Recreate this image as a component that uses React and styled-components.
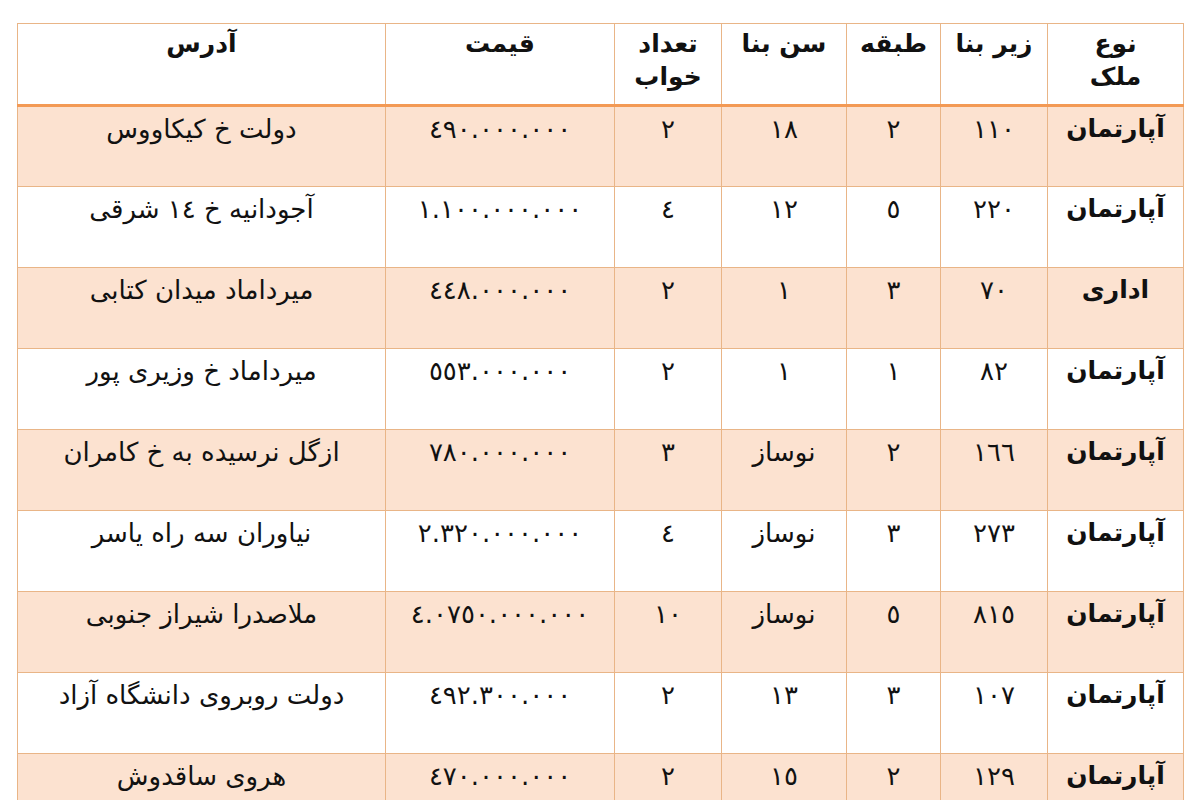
import React from 'react';
import styled, { createGlobalStyle } from 'styled-components';

const GlobalStyle = createGlobalStyle`
    html, body {
        margin: 0;
        padding: 0;
        background: #ffffff;
        overflow: hidden;
    }
`;

const colors = {
    peach: '#fce2d0',
    grid: '#e9b587',
    accent: '#f39a55',
    text: '#111111',
};

const toFa = (value) => String(value).replace(/[0-9]/g, (d) => '٠١٢٣٤٥٦٧٨٩'[d]);
const isNumeric = (value) => /^[0-9.]+$/.test(value);

const columns = [
    { key: 'type', title: ['نوع', 'ملک'], width: 136, bold: true },
    { key: 'area', title: ['زیر بنا'], width: 107 },
    { key: 'floor', title: ['طبقه'], width: 94 },
    { key: 'age', title: ['سن بنا'], width: 125 },
    { key: 'beds', title: ['تعداد', 'خواب'], width: 107 },
    { key: 'price', title: ['قیمت'], width: 229 },
    { key: 'address', title: ['آدرس'], width: 368 },
];

const rows = [
    { type: 'آپارتمان', area: '110', floor: '2', age: '18', beds: '2', price: '490.000.000', address: 'دولت خ کیکاووس' },
    { type: 'آپارتمان', area: '220', floor: '5', age: '12', beds: '4', price: '1.100.000.000', address: 'آجودانیه خ ١٤ شرقی' },
    { type: 'اداری', area: '70', floor: '3', age: '1', beds: '2', price: '448.000.000', address: 'میرداماد میدان کتابی' },
    { type: 'آپارتمان', area: '82', floor: '1', age: '1', beds: '2', price: '553.000.000', address: 'میرداماد خ وزیری پور' },
    { type: 'آپارتمان', area: '166', floor: '2', age: 'نوساز', beds: '3', price: '780.000.000', address: 'ازگل نرسیده به خ کامران' },
    { type: 'آپارتمان', area: '273', floor: '3', age: 'نوساز', beds: '4', price: '2.320.000.000', address: 'نیاوران سه راه یاسر' },
    { type: 'آپارتمان', area: '815', floor: '5', age: 'نوساز', beds: '10', price: '4.0750.000.000', address: 'ملاصدرا شیراز جنوبی' },
    { type: 'آپارتمان', area: '107', floor: '3', age: '13', beds: '2', price: '492.300.000', address: 'دولت روبروی دانشگاه آزاد' },
    { type: 'آپارتمان', area: '129', floor: '2', age: '15', beds: '2', price: '470.000.000', address: 'هروی ساقدوش' },
];

const Page = styled.div`
    padding: 23px 17px 0;
    font-family: 'DejaVu Sans', Tahoma, sans-serif;
    color: ${ colors.text };
`;

const Table = styled.table`
    direction: rtl;
    width: 1166px;
    table-layout: fixed;
    border-collapse: collapse;
    border: 1px solid ${ colors.grid };
`;

const HeadCell = styled.th`
    height: 77px;
    padding: 3px 4px 0;
    vertical-align: top;
    text-align: center;
    font-size: 25px;
    font-weight: bold;
    line-height: 33px;
    border-left: 1px solid ${ colors.grid };
    border-right: 1px solid ${ colors.grid };
    border-bottom: 3px solid ${ colors.accent };
`;

const Row = styled.tr`
    background: ${ props => props.$shaded ? colors.peach : '#ffffff' };
`;

const Cell = styled.td`
    height: 81px;
    padding: 6px 4px 0;
    box-sizing: border-box;
    vertical-align: top;
    text-align: center;
    font-size: ${ props => props.$bold ? 25 : 26 }px;
    line-height: 32px;
    letter-spacing: ${ props => props.$numeric ? '2px' : 'normal' };
    font-weight: ${ props => props.$bold ? 'bold' : 'normal' };
    border: 1px solid ${ colors.grid };
    white-space: nowrap;
`;

export default function App() {
    return (
        <Page>
            <GlobalStyle />
            <Table>
                <colgroup>
                    { columns.map(col => <col key={ col.key } style={ { width: col.width } } />) }
                </colgroup>
                <thead>
                    <tr>
                        { columns.map(col => (
                            <HeadCell key={ col.key }>
                                { col.title.map((line, i) => <div key={ i }>{ line }</div>) }
                            </HeadCell>
                        )) }
                    </tr>
                </thead>
                <tbody>
                    { rows.map((row, i) => (
                        <Row key={ i } $shaded={ i % 2 === 0 }>
                            { columns.map(col => (
                                <Cell key={ col.key } $bold={ col.bold } $numeric={ isNumeric(row[col.key]) }>
                                    { toFa(row[col.key]) }
                                </Cell>
                            )) }
                        </Row>
                    )) }
                </tbody>
            </Table>
        </Page>
    );
}
